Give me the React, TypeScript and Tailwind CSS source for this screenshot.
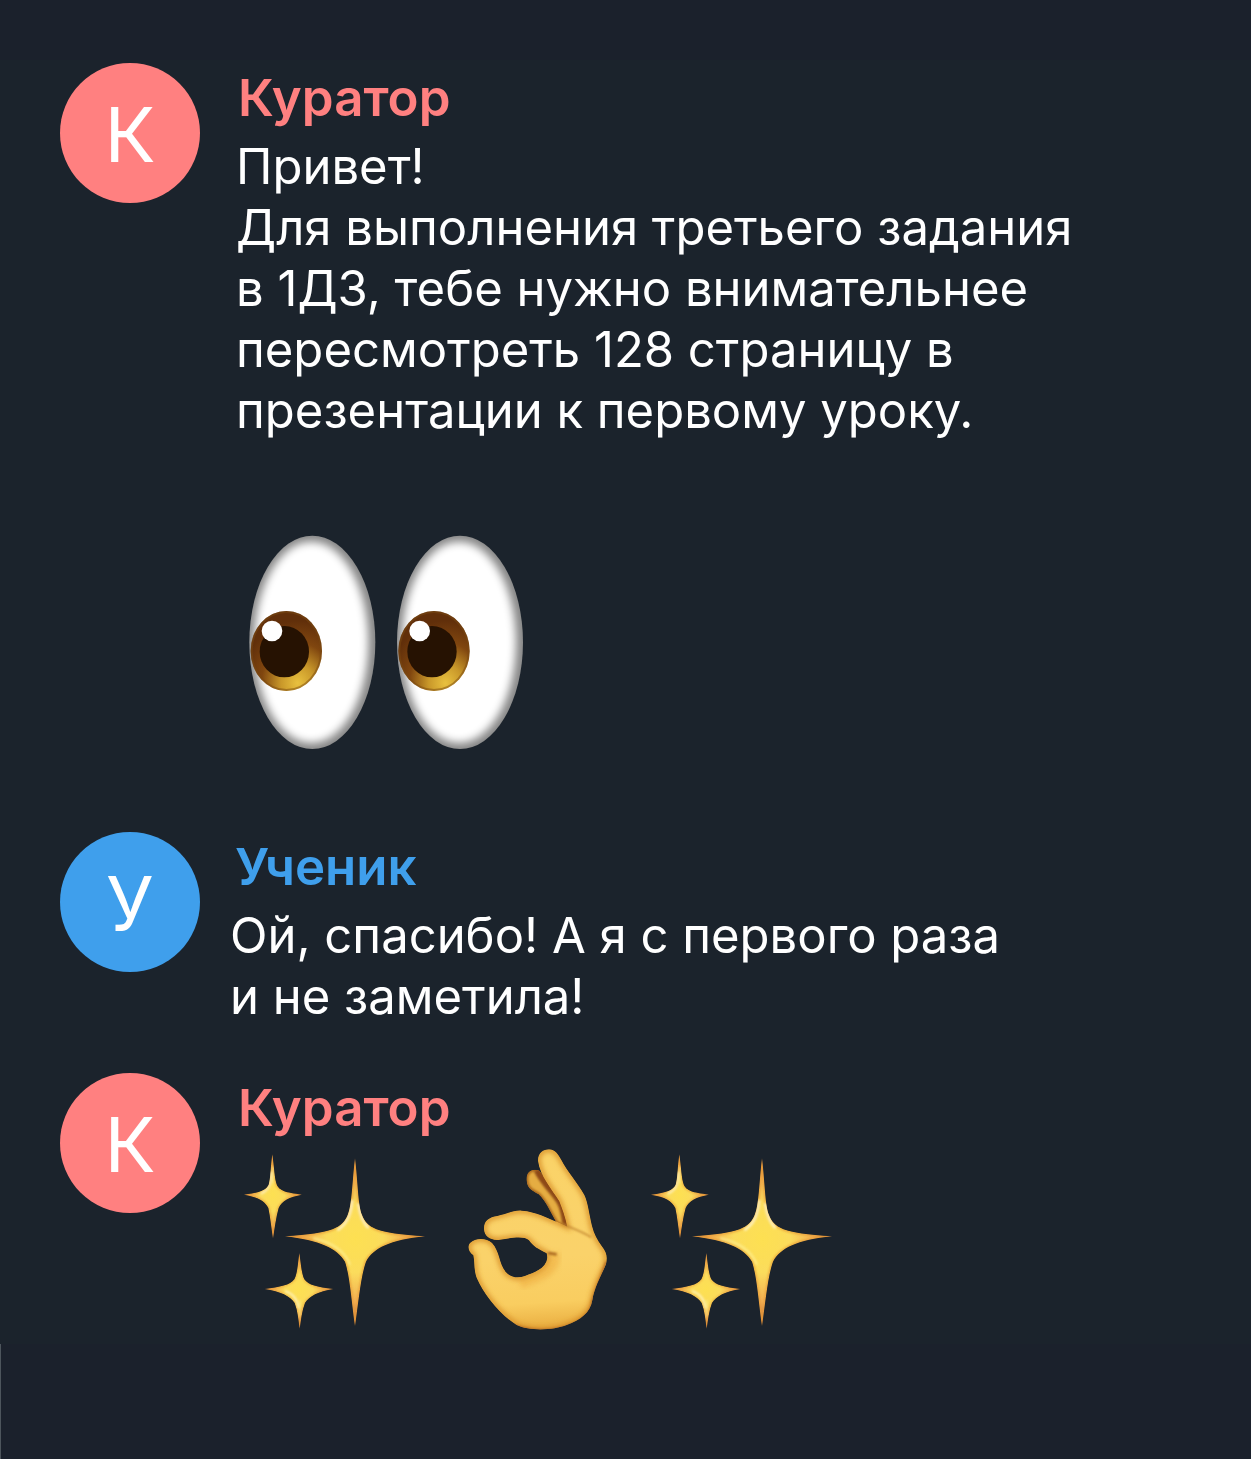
import type { ReactNode } from "react";

function Eye({ id, x }: { id: string; x: number }) {
  return (
    <g transform={`translate(${x} 0)`}>
      <ellipse cx="277" cy="397" rx="189" ry="320" fill="#858585" />
      <g clipPath={`url(#${id}-clip)`}>
        <ellipse cx="274" cy="397" rx="171" ry="302" fill="#fff" filter={`url(#${id}-soft)`} />
      </g>
      <ellipse cx="199" cy="423" rx="107" ry="120" fill={`url(#${id}-iris)`} />
      <ellipse cx="199" cy="423" rx="104" ry="117" fill="none" stroke="#7a4a12" strokeOpacity="0.5" strokeWidth="6" />
      <ellipse cx="193" cy="425" rx="74" ry="77" fill="#261202" />
      <circle cx="156" cy="363" r="31" fill="#fff" />
      <defs>
        <clipPath id={`${id}-clip`}>
          <ellipse cx="277" cy="397" rx="189" ry="320" />
        </clipPath>
        <filter id={`${id}-soft`} x="-20%" y="-20%" width="140%" height="140%">
          <feGaussianBlur stdDeviation="13" />
        </filter>
        <radialGradient id={`${id}-iris`} cx="0.66" cy="0.9" r="0.78">
          <stop offset="0" stopColor="#e9c13f" />
          <stop offset="0.3" stopColor="#c9982a" />
          <stop offset="0.65" stopColor="#80460f" />
          <stop offset="1" stopColor="#612f0a" />
        </radialGradient>
      </defs>
    </g>
  );
}

function Eyes() {
  return (
    <svg role="img" aria-label="Глаза" viewBox="0 0 990 780" className="block h-[260px] w-[330px]">
      <Eye id="eye-left" x={0} />
      <Eye id="eye-right" x={443} />
    </svg>
  );
}

const STARS = [
  {
    outline:
      "M375 54C384 130 384 195 396 225C410 262 435 280 586 289C480 299 430 325 408 365C392 410 385 490 375 559C365 490 360 410 345 365C320 325 270 301 164 289C310 280 338 262 353 225C366 195 366 130 375 54Z",
    glints: "M366 180C364 222 352 252 322 270M385 190C390 228 398 248 416 264",
    glow: "M250 295C310 308 345 335 360 375",
    weight: 8,
  },
  {
    outline:
      "M127 42C133 85 133 115 141 136C150 152 165 158 216 164C178 171 156 182 146 204C138 232 134 265 129 296C124 265 121 232 115 204C104 182 84 171 41 164C90 158 108 150 116 134C122 115 121 85 127 42Z",
    glints: "M124 95C124 132 118 150 92 161",
    glow: "M128 80L128 130",
    weight: 6,
  },
  {
    outline:
      "M208 338C213 375 215 400 223 418C236 436 260 441 311 447C265 455 238 468 225 489C216 512 213 540 209 567C205 540 203 512 194 489C180 468 152 455 103 447C150 441 180 436 193 418C202 400 203 375 208 338Z",
    glints: "M165 453C190 460 202 475 206 505",
    glow: "M209 480L209 530",
    weight: 5,
  },
];

function Sparkles({ id }: { id: string }) {
  return (
    <svg role="img" aria-label="Искры" viewBox="0 0 660 600" className="block h-[200px] w-[220px]">
      <defs>
        <filter id={`${id}-blur`} filterUnits="userSpaceOnUse" x="0" y="0" width="660" height="600">
          <feGaussianBlur stdDeviation="3" />
        </filter>
        <filter id={`${id}-edge`} filterUnits="userSpaceOnUse" x="0" y="0" width="660" height="600">
          <feGaussianBlur stdDeviation="2" />
        </filter>
        {STARS.map((star, i) => (
          <g key={star.outline}>
            <clipPath id={`${id}-clip-${i}`}>
              <path d={star.outline} />
            </clipPath>
            <radialGradient id={`${id}-fill-${i}`} cx="0.5" cy="0.48" r="0.5">
              <stop offset="0" stopColor="#fde051" />
              <stop offset="0.4" stopColor="#fbdc5c" />
              <stop offset="0.75" stopColor="#f2ae53" />
              <stop offset="1" stopColor="#bd6c40" />
            </radialGradient>
          </g>
        ))}
      </defs>
      {STARS.map((star, i) => (
        <g key={star.outline} filter={`url(#${id}-edge)`}>
          <g clipPath={`url(#${id}-clip-${i})`}>
            <path d={star.outline} fill={`url(#${id}-fill-${i})`} />
            <path d={star.outline} fill="none" stroke="#e69a35" strokeWidth={star.weight} filter={`url(#${id}-blur)`} opacity="0.8" />
            <path d={star.glints} fill="none" stroke="#fff3c0" strokeWidth={star.weight} filter={`url(#${id}-blur)`} />
            <path d={star.glow} fill="none" stroke="#fff29a" strokeWidth={star.weight} opacity="0.6" filter={`url(#${id}-blur)`} />
          </g>
        </g>
      ))}
    </svg>
  );
}

const HAND =
  "M264 62C264 38 280 28 297 28C315 28 325 44 334 60C350 92 382 127 403 165C414 188 418 225 426 258C432 282 442 300 455 318C470 338 473 350 468 372C455 405 435 435 427 480C421 518 392 540 350 555C310 571 240 574 200 555C150 525 100 460 82 418C70 390 75 368 70 346C56 334 50 320 61 308C75 294 108 292 126 309C150 335 146 370 168 397C182 413 205 415 225 408C255 397 280 386 289 365C293 354 292 348 290 340C265 328 248 318 237 301C222 288 190 293 150 299C125 303 103 291 102 268C101 242 117 232 142 228C170 222 190 210 215 212C260 215 290 234 322 246L352 260C346 230 336 205 328 184C306 148 270 108 264 62Z";
const BACK_FINGER =
  "M268 92C244 83 227 98 230 122C232 148 250 152 266 163C286 180 302 218 320 248L354 262C354 235 350 205 330 170Z";

function OkHand() {
  return (
    <svg role="img" aria-label="Окей" viewBox="0 0 561 600" className="block h-[200px] w-[187px]">
      <defs>
        <clipPath id="hand-clip">
          <path d={HAND} />
        </clipPath>
        <clipPath id="hand-back-clip">
          <path d={BACK_FINGER} />
        </clipPath>
        <filter id="hand-blur" x="-20%" y="-20%" width="140%" height="140%">
          <feGaussianBlur stdDeviation="8" />
        </filter>
        <filter id="hand-crease" filterUnits="userSpaceOnUse" x="0" y="0" width="561" height="600">
          <feGaussianBlur stdDeviation="3" />
        </filter>
        <linearGradient id="hand-fill" x1="0.5" y1="0" x2="0.55" y2="1">
          <stop offset="0" stopColor="#fad368" />
          <stop offset="0.6" stopColor="#fad26a" />
          <stop offset="0.85" stopColor="#f9cd60" />
          <stop offset="1" stopColor="#e9ad40" />
        </linearGradient>
      </defs>
      <g clipPath="url(#hand-back-clip)">
        <path d={BACK_FINGER} fill="#e5ad42" />
        <path d={BACK_FINGER} fill="none" stroke="#a9661f" strokeWidth="10" filter="url(#hand-crease)" />
        <path d="M262 90C280 130 318 160 334 192C344 215 346 240 350 262" fill="none" stroke="#8d4a17" strokeWidth="22" filter="url(#hand-crease)" />
      </g>
      <g clipPath="url(#hand-clip)">
        <path d={HAND} fill="url(#hand-fill)" />
        <path d="M210 430C260 410 320 395 312 340" fill="none" stroke="#f1b548" strokeWidth="34" opacity="0.7" filter="url(#hand-blur)" />
        <path d={HAND} fill="none" stroke="#dc972f" strokeWidth="16" filter="url(#hand-blur)" />
        <path d="M190 556C250 578 320 572 360 556C400 540 425 515 428 480L470 365" fill="none" stroke="#b56b24" strokeWidth="8" filter="url(#hand-crease)" />
      </g>
      <path d="M332 250C365 264 400 276 424 292" fill="none" stroke="#c58a33" strokeWidth="5" filter="url(#hand-crease)" />
      <path d="M294 339L320 343" fill="none" stroke="#a7651f" strokeWidth="8" filter="url(#hand-crease)" />
    </svg>
  );
}

interface MessageProps {
  author: string;
  avatarClass: string;
  nameClass: string;
  children: ReactNode;
}

function Message({ author, avatarClass, nameClass, children }: MessageProps) {
  return (
    <article className="flex items-start gap-[30px]">
      <div
        aria-hidden="true"
        className={`flex size-[140px] shrink-0 items-center justify-center rounded-full pt-[2px] text-[76px] leading-none text-white ${avatarClass}`}
      >
        {author[0]}
      </div>
      <div className="min-w-0 flex-1">
        <h2 className={`pt-[5px] text-[51px] leading-[60px] font-semibold ${nameClass}`}>{author}</h2>
        {children}
      </div>
    </article>
  );
}

export default function App() {
  return (
    <main className="flex min-h-screen flex-col bg-[#1b212c] pt-[60px] font-['Inter',sans-serif] text-white">
      <div className="bg-[#1b232c] px-[60px] pt-[3px] pb-1">
        <Message author="Куратор" avatarClass="bg-[#ff8080]" nameClass="pl-2 text-[#ff8080]">
          <p className="pt-2 pl-[6px] text-[49px] leading-[61px]">
            Привет!
            <br />
            Для выполнения третьего задания
            <br />в 1ДЗ, тебе нужно внимательнее
            <br />
            пересмотреть 128 страницу в
            <br />
            презентации к первому уроку.
          </p>
          <div className="-ml-[10px] pt-[69px]">
            <Eyes />
          </div>
        </Message>
        <div className="pt-[62px]">
          <Message author="Ученик" avatarClass="bg-[#3f9fec]" nameClass="pl-[5px] text-[#3f9fec]">
            <p className="pt-2 text-[49px] leading-[61px]">
              Ой, спасибо! А я с первого раза
              <br />и не заметила!
            </p>
          </Message>
        </div>
        <div className="pt-[46px]">
          <Message author="Куратор" avatarClass="bg-[#ff8080]" nameClass="pl-2 text-[#ff8080]">
            <div className="flex pt-[2px]">
              <Sparkles id="sparkles-left" />
              <OkHand />
              <Sparkles id="sparkles-right" />
            </div>
          </Message>
        </div>
      </div>
      <div className="flex-1 border-l border-[#4d555c]" />
    </main>
  );
}
